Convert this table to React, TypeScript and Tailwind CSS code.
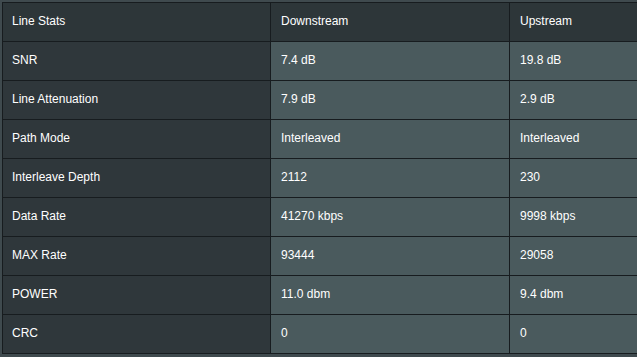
const rows: [string, string, string][] = [
  ["SNR", "7.4 dB", "19.8 dB"],
  ["Line Attenuation", "7.9 dB", "2.9 dB"],
  ["Path Mode", "Interleaved", "Interleaved"],
  ["Interleave Depth", "2112", "230"],
  ["Data Rate", "41270 kbps", "9998 kbps"],
  ["MAX Rate", "93444", "29058"],
  ["POWER", "11.0 dbm", "9.4 dbm"],
  ["CRC", "0", "0"],
];

export default function App() {
  return (
    <div
      className="h-[357px] w-[637px] overflow-hidden bg-[#3f4a4e] pl-[2px] pt-[2px] text-[12px] text-white"
      style={{ fontFamily: '"Liberation Sans", Arial, sans-serif' }}
    >
      <table className="w-[660px] table-fixed border-collapse border border-[#171c1f]">
        <colgroup>
          <col className="w-[268px]" />
          <col className="w-[239px]" />
          <col />
        </colgroup>
        <thead>
          <tr className="h-[39px] bg-[#2d3639]">
            <th className="border border-[#171c1f] px-[9px] pb-[2px] text-left font-normal">Line Stats</th>
            <th className="border border-[#171c1f] px-[10px] pb-[2px] text-left font-normal">Downstream</th>
            <th className="border border-[#171c1f] px-[10px] pb-[2px] text-left font-normal">Upstream</th>
          </tr>
        </thead>
        <tbody>
          {rows.map(([label, down, up]) => (
            <tr key={label} className="h-[39px]">
              <td className="border border-[#171c1f] bg-[#2f373b] px-[9px] pb-[2px]">{label}</td>
              <td className="border border-[#171c1f] bg-[#4a5a5d] px-[10px] pb-[2px]">{down}</td>
              <td className="border border-[#171c1f] bg-[#4a5a5d] px-[10px] pb-[2px]">{up}</td>
            </tr>
          ))}
        </tbody>
      </table>
    </div>
  );
}
